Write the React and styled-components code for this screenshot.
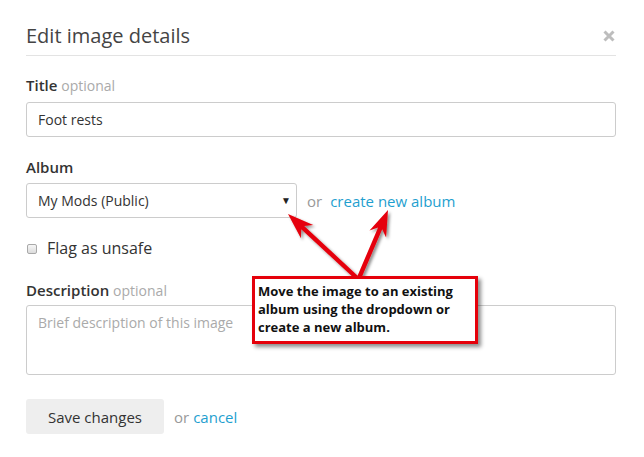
import React from "react";
import styled, { createGlobalStyle } from "styled-components";

const Global = createGlobalStyle`
  html, body { margin: 0; padding: 0; background: #fff; }
  body { font-family: "Open Sans", "Noto Sans", Arial, sans-serif; color: #333; }
  * { box-sizing: border-box; }
`;

const Page = styled.div`
  position: relative;
  width: 644px;
  height: 457px;
  padding: 0 28px 0 26px;
  overflow: hidden;
`;

const Header = styled.div`
  height: 56px;
  display: flex;
  align-items: flex-start;
  justify-content: space-between;
  padding-top: 22px;
  border-bottom: 1px solid #e3e3e3;
`;

const Heading = styled.h1`
  margin: 0;
  font-size: 20px;
  line-height: 28px;
  font-weight: 400;
  color: #444;
`;

const Close = styled.span`
  display: flex;
  margin-top: 8px;
  margin-right: 1px;
`;

const Field = styled.div`
  margin-top: ${(p) => p.$top}px;
`;

const Label = styled.div`
  font-size: 15px;
  line-height: 20px;
  font-weight: 600;
  color: #333;
  margin-bottom: ${(p) => p.$gap || 6}px;
  span {
    font-weight: 400;
    color: #aaa;
    font-size: 14px;
  }
`;

const TextInput = styled.div`
  height: 35px;
  border: 1px solid #ccc;
  border-radius: 3px;
  display: flex;
  align-items: center;
  padding: 0 11px;
  font-size: 14px;
  color: #333;
  width: ${(p) => p.$width || "100%"};
`;

const SelectRow = styled.div`
  display: flex;
  align-items: center;
`;

const Select = styled(TextInput)`
  justify-content: space-between;
  padding-right: 5px;
`;

const Caret = styled.span`
  font-size: 10px;
  color: #222;
  margin-top: -1px;
`;

const Or = styled.span`
  color: #999;
  font-size: 15px;
  margin: 0 ${(p) => p.$right || 8}px 0 ${(p) => p.$left || 10}px;
`;

const Link = styled.a`
  color: #1f9fcf;
  font-size: 15px;
  text-decoration: none;
`;

const CheckRow = styled.label`
  display: flex;
  align-items: center;
  height: 20px;
  font-size: 16px;
  color: #333;
  gap: 10px;
`;

const Box = styled.span`
  width: 10px;
  height: 10px;
  margin-left: 1px;
  border: 1px solid #a9a9a9;
  border-radius: 2px;
  background: linear-gradient(#f6f6f6, #dcdcdc);
  margin-top: 1px;
`;

const TextArea = styled.div`
  height: 70px;
  border: 1px solid #ccc;
  border-radius: 3px;
  padding: 7px 11px;
  font-size: 14px;
  color: #aaa;
  line-height: 20px;
`;

const Actions = styled.div`
  display: flex;
  align-items: center;
  margin-top: 24px;
`;

const Button = styled.button`
  width: 138px;
  height: 35px;
  border: none;
  border-radius: 3px;
  background: #eeeeee;
  font-family: inherit;
  font-size: 15px;
  color: #333;
  padding: 0;
`;

const Note = styled.div`
  position: absolute;
  left: 252px;
  top: 276px;
  width: 226px;
  height: 68px;
  border: 3px solid #e5000a;
  background: #fff;
  box-shadow: 3px 3px 4px rgba(0, 0, 0, 0.45);
  padding: 3px 3px;
  font-size: 13px;
  line-height: 18px;
  font-weight: 700;
  color: #111;
`;

const Arrows = styled.svg`
  position: absolute;
  left: 0;
  top: 0;
  pointer-events: none;
`;

function arrowPoints(x1, y1, x2, y2, shaft = 2.2, head = 9, headLen = 26) {
  const dx = x2 - x1;
  const dy = y2 - y1;
  const len = Math.hypot(dx, dy);
  const ux = dx / len;
  const uy = dy / len;
  const nx = -uy;
  const ny = ux;
  const bx = x2 - ux * headLen;
  const by = y2 - uy * headLen;
  const nb = x2 - ux * (headLen - 6);
  const nby = y2 - uy * (headLen - 6);
  const pts = [
    [x1 + nx * shaft, y1 + ny * shaft],
    [nb + nx * shaft, nby + ny * shaft],
    [bx + nx * head, by + ny * head],
    [x2, y2],
    [bx - nx * head, by - ny * head],
    [nb - nx * shaft, nby - ny * shaft],
    [x1 - nx * shaft, y1 - ny * shaft],
  ];
  return pts.map((p) => p.map((v) => v.toFixed(1)).join(",")).join(" ");
}

export default function App() {
  return (
    <>
      <Global />
      <Page>
        <Header>
          <Heading>Edit image details</Heading>
          <Close>
            <svg width="12" height="12" viewBox="0 0 12 12">
              <path d="M1.5 1.5 L10.5 10.5 M10.5 1.5 L1.5 10.5" stroke="#bdbdbd" strokeWidth="3" />
            </svg>
          </Close>
        </Header>

        <Field $top={19}>
          <Label>
            Title <span>optional</span>
          </Label>
          <TextInput>Foot rests</TextInput>
        </Field>

        <Field $top={20}>
          <Label $gap={6}>Album</Label>
          <SelectRow>
            <Select $width="271px">
              My Mods (Public)
              <Caret>▼</Caret>
            </Select>
            <Or>or</Or>
            <Link>create new album</Link>
          </SelectRow>
        </Field>

        <Field $top={20}>
          <CheckRow>
            <Box />
            Flag as unsafe
          </CheckRow>
        </Field>

        <Field $top={22}>
          <Label $gap={4}>
            Description <span>optional</span>
          </Label>
          <TextArea>Brief description of this image</TextArea>
        </Field>

        <Actions>
          <Button>Save changes</Button>
          <Or $left={10} $right={4}>or</Or>
          <Link>cancel</Link>
        </Actions>

        <Arrows width="644" height="457" viewBox="0 0 644 457">
          <defs>
            <filter id="sh" x="-20%" y="-20%" width="140%" height="140%">
              <feDropShadow dx="2" dy="2" stdDeviation="1.5" floodColor="#000" floodOpacity="0.45" />
            </filter>
          </defs>
          <g fill="#e5000a" filter="url(#sh)">
            <polygon points={arrowPoints(357, 278, 288, 214)} />
            <polygon points={arrowPoints(359, 278, 388, 210)} />
          </g>
        </Arrows>

        <Note>
          Move the image to an existing album using the dropdown or create a new album.
        </Note>
      </Page>
    </>
  );
}
